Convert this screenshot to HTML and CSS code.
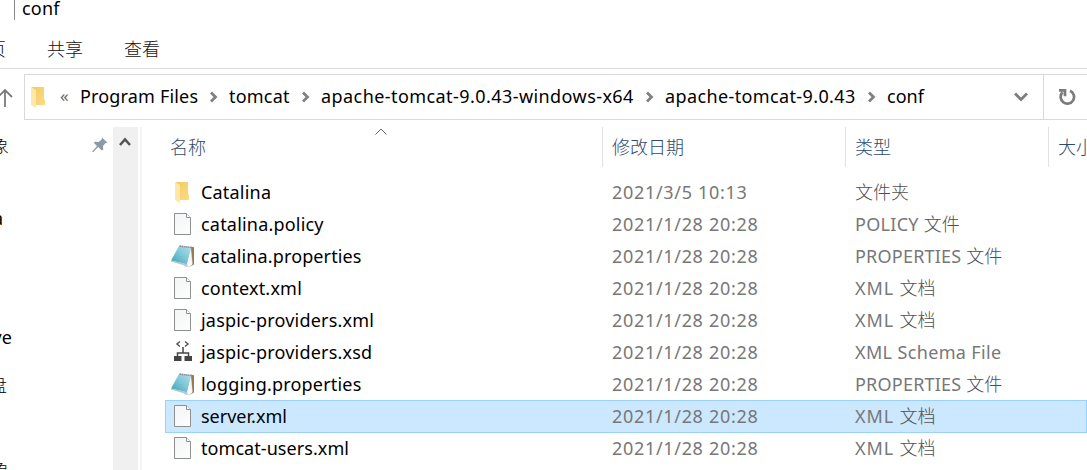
FILE: index.html
```html
<!DOCTYPE html>
<html lang="zh-CN">
<head>
<meta charset="utf-8">
<title>conf</title>
<link rel="stylesheet" href="styles.css">
</head>
<body>
<svg class="defs" width="0" height="0" aria-hidden="true">
  <defs>
    <linearGradient id="gold" x1="0" y1="0" x2="1" y2="1"><stop offset="0" stop-color="#f2cb62"/><stop offset="1" stop-color="#fbdc83"/></linearGradient>
    <linearGradient id="paper" x1="0" y1="0" x2="1" y2="1"><stop offset="0" stop-color="#f3f5f6"/><stop offset="1" stop-color="#fdfdfd"/></linearGradient>
    <linearGradient id="teal" x1="0" y1="1" x2="1" y2="0"><stop offset="0" stop-color="#3f9fb8"/><stop offset=".5" stop-color="#7cc5d5"/><stop offset="1" stop-color="#b5e0e8"/></linearGradient>
    <symbol id="folder" viewBox="0 0 24 24"><path d="M6 2h12v12l1 1v5H6z" fill="url(#gold)"/><path d="M5 2l5 3v18l-5-3z" fill="#ffe8a6"/></symbol>
    <symbol id="doc" viewBox="0 0 24 24"><path d="M4.5 1.5h12l4 4v17h-16z" fill="url(#paper)" stroke="#909090"/><path d="M16.5 1.5v4h4" fill="#fff" stroke="#909090"/></symbol>
    <symbol id="notes" viewBox="0 0 24 24"><path d="M21 2.500l3 .8v17.200l-4 2z" fill="#987b4d"/><path d="M20.500 4l2 16-3 3-5-1z" fill="#e7ecef" stroke="#b8c0c5" stroke-width=".6"/><path d="M9 2L21.500 3.500l-4.500 17-4-1L1 16.500z" fill="url(#teal)"/><path d="M1 16.500l16 3.500 1 2.500L1 17.500z" fill="#b1c9d0"/><path d="M21 4.500l-4 16 2 2.500 3-2.500z" fill="#f7f9fa"/><path d="M9.500 2l12 1.500" stroke="#858d91" stroke-width="1.500" stroke-dasharray="1.500 .5"/></symbol>
    <symbol id="schema" viewBox="0 0 24 24"><path d="M10 1.500L7 4l3 2.500M15 1.500L18 4l-3 2.500" fill="none" stroke="#555" stroke-width="1.500"/><path d="M13 7v6M7.500 17v-4h11v4" fill="none" stroke="#444" stroke-width="1.500"/><path d="M4 16h7.500v5H4zM14.500 16H22v5h-7.500z" fill="#444"/></symbol>
    <symbol id="chev" viewBox="0 0 10 12"><path d="M2 1.500l4.500 4.500L2 10.500" fill="none" stroke="#808080" stroke-width="2.800"/></symbol>
  </defs>
</svg>
<div class="window">
  <div class="title"><span>conf</span></div>
  <div class="tabs"><span class="tab-home">主页</span><span>共享</span><span>查看</span></div>
  <div class="address">
    <svg class="up" width="13" height="20" viewBox="0 0 13 20"><path d="M5 19V2M-2 9l7-7 7 7" fill="none" stroke="#7a7a7a" stroke-width="1.800"/></svg>
    <div class="path">
      <svg class="path-folder" width="24" height="24"><use href="#folder"/></svg>
      <span class="more">«</span>
      <span class="c1">Program Files</span><svg class="s1" width="10" height="12"><use href="#chev"/></svg>
      <span class="c2">tomcat</span><svg class="s2" width="10" height="12"><use href="#chev"/></svg>
      <span class="c3">apache-tomcat-9.0.43-windows-x64</span><svg class="s3" width="10" height="12"><use href="#chev"/></svg>
      <span class="c4">apache-tomcat-9.0.43</span><svg class="s4" width="10" height="12"><use href="#chev"/></svg>
      <span class="c5">conf</span>
      <svg class="drop" width="14" height="10" viewBox="0 0 14 10"><path d="M1 1.500l6 6 6-6" fill="none" stroke="#7d7d7d" stroke-width="2.800"/></svg>
    </div>
    <div class="refresh"><svg width="18" height="18" viewBox="0 0 18 18"><path d="M12 2.800A6.700 6.700 0 1 1 4.500 4.300M1 2.300h6v6" fill="none" stroke="#7c7c7c" stroke-width="2.700"/></svg></div>
  </div>
  <div class="main">
    <div class="nav">
      <div class="nav-row"><span>对象</span><svg width="16" height="16" viewBox="0 0 16 16"><path d="M10 .5l5.500 5.300-2 .2-2.500 3 .3 3.500-1.500 1-3.600-3.500L1 15.200l-.8-.6L5 9 1.700 5.700l1.500-1 3.300.3 3.200-2.500z" fill="#8d9aa5"/></svg></div>
      <div class="nav-row row-a"><span>a</span></div>
      <div class="nav-row row-drive"><span>OneDrive</span></div>
      <div class="nav-row row-disk"><span>磁盘</span></div>
      <div class="nav-row row-last"><span>对象</span></div>
    </div>
    <div class="scroll"><svg width="12" height="10" viewBox="0 0 12 10"><path d="M1 8l5-5.500L11 8" fill="none" stroke="#555" stroke-width="2.600"/></svg></div>
    <div class="list">
      <div class="head"><div class="name">名称<svg class="sort" width="12" height="7" viewBox="0 0 12 7"><path d="M.5 6.500L6 1l5.500 5.500" fill="none" stroke="#666"/></svg></div><div>修改日期</div><div>类型</div><div>大小</div></div>
      <div class="files">
        <div class="row"><svg><use href="#folder"/></svg><span class="n1">Catalina</span><span class="date d0">2021/3/5 10:13</span><span class="type"><span class="zh">文件夹</span></span></div>
        <div class="row"><svg><use href="#doc"/></svg><span class="n2">catalina.policy</span><span class="date">2021/1/28 20:28</span><span class="type pol">POLICY <span class="zh">文件</span></span></div>
        <div class="row"><svg><use href="#notes"/></svg><span class="n3">catalina.properties</span><span class="date">2021/1/28 20:28</span><span class="type prop">PROPERTIES <span class="zh">文件</span></span></div>
        <div class="row"><svg><use href="#doc"/></svg><span class="n4">context.xml</span><span class="date">2021/1/28 20:28</span><span class="type xml">XML <span class="zh">文档</span></span></div>
        <div class="row"><svg><use href="#doc"/></svg><span class="n5">jaspic-providers.xml</span><span class="date">2021/1/28 20:28</span><span class="type xml">XML <span class="zh">文档</span></span></div>
        <div class="row"><svg><use href="#schema"/></svg><span class="n6">jaspic-providers.xsd</span><span class="date">2021/1/28 20:28</span><span class="type xsd">XML Schema File</span></div>
        <div class="row"><svg><use href="#notes"/></svg><span class="n7">logging.properties</span><span class="date">2021/1/28 20:28</span><span class="type prop">PROPERTIES <span class="zh">文件</span></span></div>
        <div class="row selected"><svg><use href="#doc"/></svg><span class="n8">server.xml</span><span class="date">2021/1/28 20:28</span><span class="type xml">XML <span class="zh">文档</span></span></div>
        <div class="row"><svg><use href="#doc"/></svg><span class="n9">tomcat-users.xml</span><span class="date">2021/1/28 20:28</span><span class="type xml">XML <span class="zh">文档</span></span></div>
      </div>
    </div>
  </div>
</div>
</body>
</html>
```
FILE: styles.css
```css
* { box-sizing: border-box; }
body { margin: 0; background: #fff; color: #000; font: 18px/32px "Noto Sans", "Noto Sans CJK SC", sans-serif; overflow: hidden; }
svg { display: block; flex: none; }
.defs { position: absolute; }
.window { width: 1087px; height: 470px; overflow: hidden; display: flex; flex-direction: column; white-space: nowrap; }
.title { height: 20px; flex: none; margin-left: 14px; padding-left: 7px; border-left: 1px solid #888; line-height: 16px; letter-spacing: .2px; }
.tabs { height: 49px; flex: none; display: flex; border-bottom: 1px solid #dadada; line-height: 58px; color: #111; font-weight: 300; gap: 41px; }
.tab-home { margin-left: -30px; }
.address { height: 58px; flex: none; display: flex; padding-top: 5px; }
.up { margin: 14px 11px 0 0; }
.path { width: 1020px; flex: none; height: 46px; border: 1px solid #d9d9d9; display: flex; align-items: center; }
.path span { padding-bottom: 2px; }
.path-folder { margin-left: 1px; }
.more { width: 20px; flex: none; margin-left: 10px; color: #666; font-size: 17px; }
.path .c1, .path .c2, .path .c3, .path .c4, .path .c5 { flex: none; }
.c1 { width: 129px; letter-spacing: .17px; }
.c2 { width: 72px; letter-spacing: .2px; }
.c3 { width: 324px; letter-spacing: .43px; }
.c4 { width: 202px; letter-spacing: .38px; }
.c5 { width: 127px; }
.path > svg[class^="s"] { margin-right: 10px; }
.refresh { width: 43px; height: 46px; flex: none; border: solid #d9d9d9; border-width: 1px 0; padding: 13px 0 0 14px; }
.main { flex: 1; display: flex; min-height: 0; }
.nav { width: 113px; height: 343px; overflow: hidden; flex: none; padding-top: 3px; }
.nav-row { height: 32px; display: flex; justify-content: space-between; align-items: center; padding-right: 5px; }
.nav-row svg { margin-top: -2px; }
.nav-row span { margin-left: -27px; font-weight: 300; }
.row-a { margin-top: 40px; }
.row-a span { margin-left: -7px; font-weight: 400; }
.row-drive { margin-top: 87px; }
.row-drive span { margin-left: -68px; font-weight: 400; }
.row-disk { margin-top: 16px; }
.row-disk span { margin-left: -29px; }
.row-last { margin-top: 53px; }
.scroll { width: 29px; flex: none; background: linear-gradient(90deg, #f0f0f0 25px, #fff 25px 27px, #f5f5f5 27px); padding: 10px 0 0 6px; }
.list { flex: 1; }
.head { display: grid; grid-template-columns: 461px 243px 203px 38px; height: 40px; line-height: 40px; color: #2f4a6c; font-weight: 300; }
.head > div { border-right: 1px solid #e3e3e3; padding-left: 9px; overflow: hidden; }
.head > div:last-child { border: 0; }
.head .name { display: flex; padding-left: 28px; position: relative; }
.sort { position: absolute; left: 233px; top: 1px; }
.files { margin: 9px 0 0 23px; }
.row { display: grid; grid-template-columns: 36px 411px 243px 1fr; height: 32px; line-height: 32px; align-items: center; letter-spacing: .2px; }
.row svg { width: 24px; height: 24px; margin-left: 5px; }
.row .n3 { letter-spacing: .12px; }
.row .n8 { letter-spacing: 0; }
.row .n9 { letter-spacing: .06px; }
.date, .type { color: #777; }
.date { letter-spacing: .68px; }
.pol { letter-spacing: .3px; }
.prop { letter-spacing: .22px; }
.xml { letter-spacing: .9px; }
.xsd { letter-spacing: .36px; }
.zh { font-weight: 300; color: #505050; letter-spacing: 0; }
.selected { height: 33px; margin-bottom: -1px; padding-bottom: 1px; background: #cce8ff; box-shadow: inset 0 0 0 1px #99d1ff; }
```
